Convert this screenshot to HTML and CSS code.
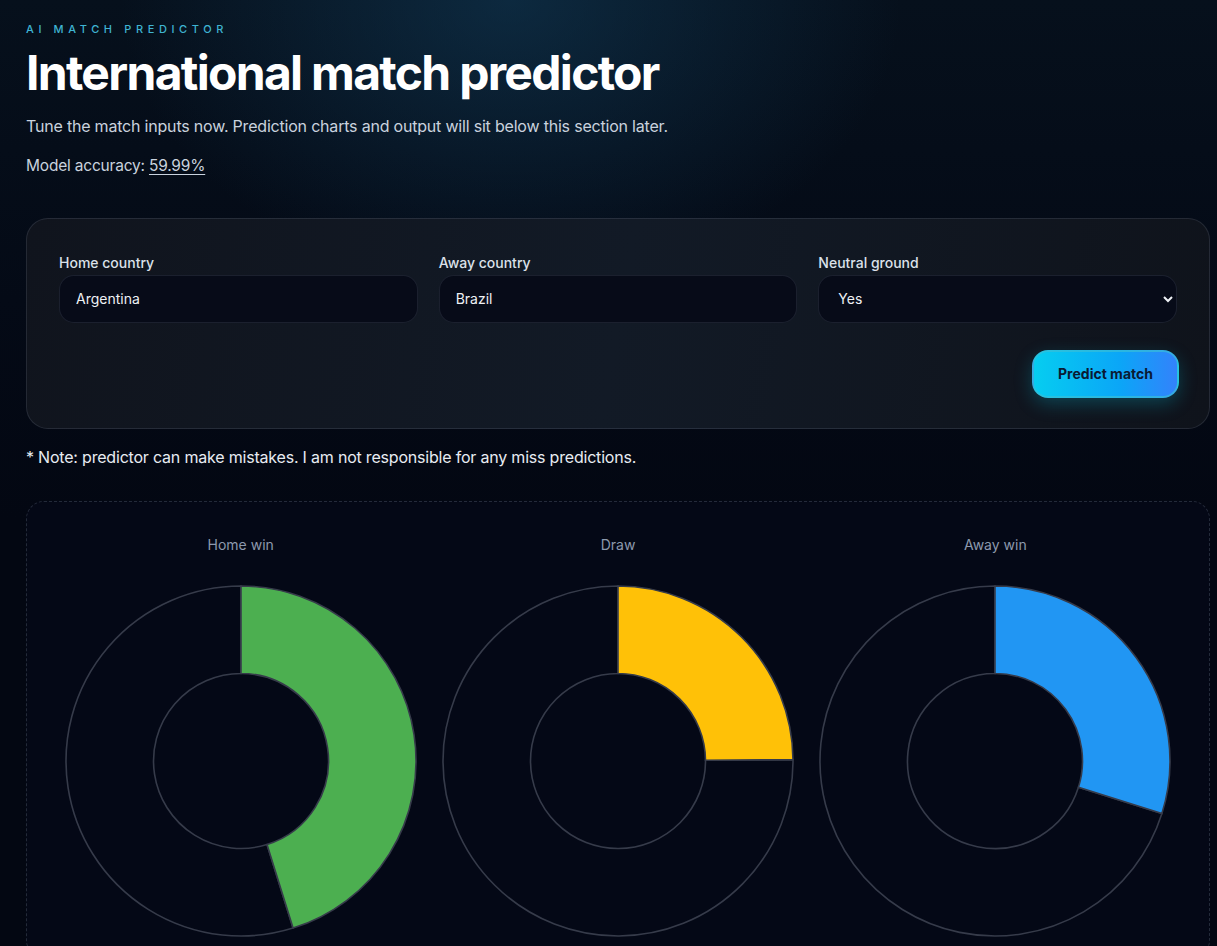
FILE: index.html
```html
<!DOCTYPE html>
<html lang="en">
<head>
<meta charset="UTF-8">
<meta name="viewport" content="width=device-width, initial-scale=1.0">
<title>International match predictor</title>
<link rel="stylesheet" href="styles.css">
</head>
<body>
    <header id="intro">
        <p class="eyebrow">AI Match Predictor</p>
        <h1>International match predictor</h1>
        <p class="lead">Tune the match inputs now. Prediction charts and output will sit below this section later.</p>
        <p class="accuracy">Model accuracy: <a href="#">59.99%</a></p>
    </header>

    <form id="match-form">
        <div class="fields">
            <div class="field">
                <label for="home">Home country</label>
                <input type="text" id="home" value="Argentina">
            </div>
            <div class="field">
                <label for="away">Away country</label>
                <input type="text" id="away" value="Brazil">
            </div>
            <div class="field">
                <label for="neutral">Neutral ground</label>
                <select id="neutral">
                    <option selected>Yes</option>
                    <option>No</option>
                </select>
            </div>
        </div>
        <div class="actions">
            <button type="button">Predict match</button>
        </div>
    </form>

    <p class="note">* Note: predictor can make mistakes. I am not responsible for any miss predictions.</p>

    <section id="charts">
        <!-- each donut: coloured share from 12 o'clock, remainder left empty -->
        <div class="chart">
            <p class="chart-title">Home win</p>
            <svg class="donut" width="352" height="352" viewBox="0 0 352 352">
                <path class="rest" d="M228.05,343.09 A175,175 0 1 1 176,1 L176,88.5 A87.5,87.5 0 1 0 202.02,259.55 Z"/>
                <path class="slice home" d="M176,1 A175,175 0 0 1 228.05,343.09 L202.02,259.55 A87.5,87.5 0 0 0 176,88.5 Z"/>
            </svg>
        </div>
        <div class="chart">
            <p class="chart-title">Draw</p>
            <svg class="donut" width="352" height="352" viewBox="0 0 352 352">
                <path class="rest" d="M351,174.6 A175,175 0 1 1 176,1 L176,88.5 A87.5,87.5 0 1 0 263.5,175.3 Z"/>
                <path class="slice draw" d="M176,1 A175,175 0 0 1 351,174.6 L263.5,175.3 A87.5,87.5 0 0 0 176,88.5 Z"/>
            </svg>
        </div>
        <div class="chart">
            <p class="chart-title">Away win</p>
            <svg class="donut" width="352" height="352" viewBox="0 0 352 352">
                <path class="rest" d="M342.9,228.6 A175,175 0 1 1 176,1 L176,88.5 A87.5,87.5 0 1 0 259.45,202.3 Z"/>
                <path class="slice away" d="M176,1 A175,175 0 0 1 342.9,228.6 L259.45,202.3 A87.5,87.5 0 0 0 176,88.5 Z"/>
            </svg>
        </div>
    </section>
</body>
</html>
```

FILE: styles.css
```css
html {
    background-color: #030712;
}
body {
    font-family: Inter, "Liberation Sans", sans-serif;
    font-size: 16px;
    color: #e5e7eb;
    margin: 0;
    padding: 22px 7px 40px 26px;
    min-height: 100vh;
    box-sizing: border-box;
    background:
        radial-gradient(ellipse 520px 380px at 42% 0%, rgba(18, 62, 92, 0.55), transparent 75%),
        linear-gradient(180deg, #06101c 0%, #040a16 300px, #030712 520px);
}
#intro p {
    margin: 0;
}
.eyebrow {
    font-size: 11px;
    font-weight: 500;
    letter-spacing: 0.42em;
    text-transform: uppercase;
    color: #3fb4d2;
}
h1 {
    font-size: 48px;
    font-weight: 700;
    letter-spacing: -1.7px;
    color: #ffffff;
    margin: 8px 0 14px 0;
    line-height: 1.2;
}
.lead {
    font-size: 16px;
    color: #c9d2de;
    letter-spacing: -0.2px;
}
.accuracy {
    margin-top: 20px !important;
    font-size: 15.5px;
    color: #c9d2de;
    letter-spacing: -0.2px;
}
.accuracy a {
    color: #c9d2de;
    text-decoration: underline;
    text-underline-offset: 3px;
}
#match-form {
    margin-top: 43px;
    padding: 35px 32px 30px 32px;
    border: 1px solid rgba(148, 163, 184, 0.16);
    border-radius: 22px;
    background: linear-gradient(100deg, #10141d 0%, #121a26 50%, #0f131b 100%);
}
.fields {
    display: grid;
    grid-template-columns: repeat(3, 1fr);
    gap: 21px;
}
.field label {
    display: block;
    font-size: 14px;
    font-weight: 500;
    color: #dbe1ea;
    margin-bottom: 4px;
}
input[type="text"], select {
    width: 100%;
    height: 48px;
    box-sizing: border-box;
    padding: 0 16px;
    font-family: inherit;
    font-size: 14px;
    color: #eef1f5;
    background-color: #070b18;
    border: 1px solid rgba(148, 163, 184, 0.14);
    border-radius: 15px;
    outline: none;
}
select {
    color-scheme: dark;
    padding-left: 15px;
}
.actions {
    display: flex;
    justify-content: flex-end;
    margin-top: 27px;
}
button {
    width: 147px;
    height: 48px;
    margin-right: -2px;
    font-family: inherit;
    font-size: 14px;
    font-weight: 700;
    color: #0a1a33;
    border: 2px solid rgba(56, 189, 215, 0.7);
    border-radius: 16px;
    background: linear-gradient(90deg, #06cdf0 0%, #0ba6f7 60%, #3382fb 100%);
    box-shadow: 0 6px 18px rgba(6, 182, 212, 0.28);
    cursor: pointer;
}
.note {
    margin: 18px 0 0 0;
    font-size: 16px;
    letter-spacing: -0.2px;
    color: #e8ecf2;
}
#charts {
    display: grid;
    grid-template-columns: repeat(3, 1fr);
    margin-top: 34px;
    padding: 34px 25px 20px 25px;
    border: 1px dashed rgba(148, 163, 184, 0.22);
    border-radius: 18px;
    background-color: #040816;
}
.chart {
    display: flex;
    flex-direction: column;
    align-items: center;
}
.chart-title {
    margin: 0 0 32px 0;
    font-size: 14px;
    color: #8d99ad;
}
.donut path {
    stroke: #363b4a;
    stroke-width: 1.6;
}
.rest {
    fill: #040816;
}
.home {
    fill: #4caf50;
}
.draw {
    fill: #ffc107;
}
.away {
    fill: #2196f3;
}
```
